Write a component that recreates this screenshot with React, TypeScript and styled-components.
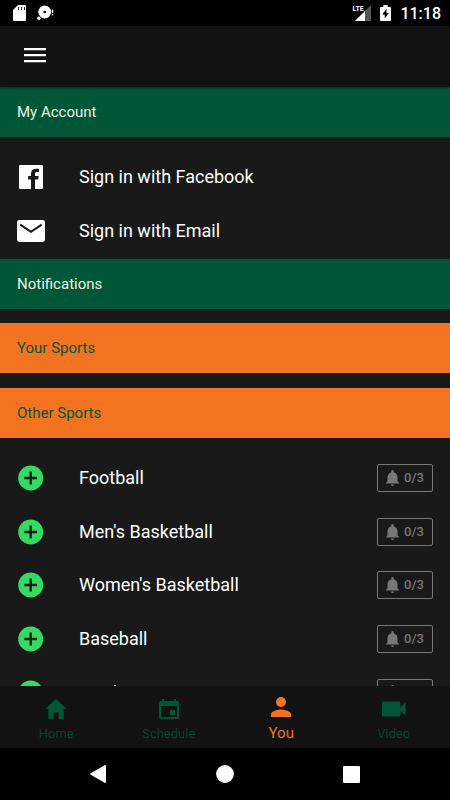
import React from "react";
import styled, { createGlobalStyle } from "styled-components";

const GlobalStyle = createGlobalStyle`
  *, *::before, *::after { box-sizing: border-box; }
  body { margin: 0; background: #191919; }
  body, button { font-family: Roboto, "Liberation Sans", sans-serif; }
  button { margin: 0; padding: 0; border: 0; background: none; color: inherit; cursor: pointer; }
`;

const Screen = styled.div`
  display: flex;
  flex-direction: column;
  height: 100vh;
  background: #191919;
  color: #fff;
`;

const StatusBar = styled.div`
  display: flex;
  flex: none;
  align-items: center;
  justify-content: space-between;
  height: 26px;
  padding: 0 9px 0 13px;
  background: #000;
`;

const StatusGroup = styled.div<{ $gap: number }>`
  display: flex;
  align-items: center;
  gap: ${(p) => p.$gap}px;
`;

const Signal = styled.div`
  position: relative;
  display: flex;
  width: 19px;
  justify-content: flex-end;
`;

const NetworkLabel = styled.span`
  position: absolute;
  top: 0;
  left: 0;
  font-size: 7px;
  font-weight: 700;
  line-height: 8px;
`;

const Clock = styled.time`
  padding-top: 2px;
  font-size: 16px;
  font-weight: 500;
  line-height: 20px;
`;

const AppBar = styled.header`
  position: relative;
  display: flex;
  flex: none;
  align-items: center;
  height: 61px;
  padding: 0 17px 3px;
  background: #121212;
  box-shadow: 0 1px 2px rgba(0, 0, 0, 0.45);
`;

const MenuButton = styled.button`
  display: flex;
  align-items: center;
  justify-content: center;
  width: 36px;
  height: 36px;
`;

const Content = styled.main`
  flex: 1;
  min-height: 0;
  overflow-y: auto;
  scrollbar-width: none;
`;

const SectionHeading = styled.h2<{ $accent?: boolean; $gap?: number }>`
  margin: ${(p) => p.$gap ?? 0}px 0 0;
  padding: 0 17px;
  background: ${(p) => (p.$accent ? "#f47321" : "#005737")};
  color: ${(p) => (p.$accent ? "#005737" : "#f0f0e0")};
  font-size: 15px;
  font-weight: 400;
  line-height: 50px;
`;

const List = styled.ul`
  display: grid;
  grid-auto-rows: 54px 53px 54px;
  margin: 0;
  padding: 13px 0 2px;
  list-style: none;
`;

const ListItem = styled.li`
  display: flex;
  align-items: center;
  padding: 0 17px;
`;

const RowButton = styled.button`
  display: flex;
  flex: 1;
  align-items: center;
  gap: 34px;
  height: 100%;
  font-size: 18px;
  line-height: 24px;
  text-align: left;
`;

const IconSlot = styled.span`
  display: flex;
  flex: none;
  justify-content: center;
  width: 28px;
`;

const AlertButton = styled.button`
  display: flex;
  flex: none;
  align-items: center;
  justify-content: center;
  gap: 5px;
  width: 56px;
  height: 28px;
  border: 1px solid #777;
  border-radius: 2px;
  color: #777;
  font-size: 13px;
  font-weight: 500;
  line-height: 16px;
`;

const TabBar = styled.nav`
  display: grid;
  flex: none;
  grid-template-columns: repeat(4, 1fr);
  height: 62px;
  background: #121212;
`;

const Tab = styled.button<{ $active?: boolean }>`
  display: flex;
  flex-direction: column;
  align-items: center;
  justify-content: flex-start;
  gap: 5px;
  padding-top: ${(p) => (p.$active ? 11 : 13)}px;
  color: ${(p) => (p.$active ? "#f47321" : "#005737")};
  font-size: ${(p) => (p.$active ? 15 : 13)}px;
  line-height: ${(p) => (p.$active ? 22 : 20)}px;
`;

const TabLabel = styled.span<{ $active?: boolean }>`
  opacity: ${(p) => (p.$active ? 1 : 0.75)};
`;

const SystemBar = styled.nav`
  display: grid;
  flex: none;
  grid-template-columns: repeat(3, 1fr);
  height: 52px;
  padding: 0 35px;
  background: #000;
`;

const SystemButton = styled.button`
  display: flex;
  align-items: center;
  justify-content: center;
`;

const SdCardIcon = () => (
  <svg width="13" height="16" viewBox="0 0 13 16" fill="#fff" aria-hidden="true">
    <path d="M5 0h7q1 0 1 1v14q0 1-1 1H1q-1 0-1-1V5z" />
    <path d="M5 2h1v3H5zM8 2h1v3H8zM11 2h1v3h-1z" fill="#222" />
  </svg>
);

const SyncIcon = () => (
  <svg width="17" height="16" viewBox="0 0 17 16" fill="#fff" aria-hidden="true">
    <circle cx="7.7" cy="7" r="6.4" />
    <circle cx="7.7" cy="7" r="1.3" fill="#000" />
    <path d="M0 11.400l2.600-.6 2 2.400-1 2.600H0z" fill="#000" />
    <circle cx="1.9" cy="13.2" r="1.7" />
    <path d="M14.800 4.400h1.400v3.800h-1.400zM14.800 9h1.400v1.400h-1.400z" />
  </svg>
);

const SignalIcon = () => (
  <svg width="16" height="16" viewBox="0 0 16 16" aria-hidden="true">
    <path d="M16 0v16H0z" fill="#555" />
    <path d="M10 6v10H0z" fill="#fff" />
  </svg>
);

const BatteryIcon = () => (
  <svg width="11" height="16" viewBox="0 0 10 16" preserveAspectRatio="none" aria-hidden="true">
    <path d="M3 0h4v2h2q1 0 1 1v12q0 1-1 1H1q-1 0-1-1V3q0-1 1-1h2z" fill="#fff" />
    <path d="M6 3.800L2 9.400h2.300v4.200L8 8H5.800z" fill="#000" />
  </svg>
);

const MenuIcon = () => (
  <svg width="22" height="16" viewBox="0 0 22 16" fill="#fff" aria-hidden="true">
    <path d="M0 1h22v2.300H0zM0 7h22v2.300H0zM0 13h22v2.300H0z" />
  </svg>
);

const FacebookIcon = () => (
  <svg width="24" height="24" viewBox="64 64 384 384" fill="#fff" aria-hidden="true">
    <path d="M426.800 64H85.200C73.500 64 64 73.500 64 85.200v341.600c0 11.700 9.500 21.200 21.200 21.200H256V296h-45.900v-56H256v-41.400c0-49.600 34.400-76.600 78.700-76.600 21.200 0 44 1.600 49.300 2.300v51.800h-35.300c-24.100 0-28.700 11.400-28.700 28.200V240h57.400l-7.500 56H320v152h106.800c11.700 0 21.200-9.500 21.200-21.200V85.200c0-11.700-9.500-21.200-21.200-21.200z" />
  </svg>
);

const MailIcon = () => (
  <svg width="28" height="22" viewBox="0 0 28 22" aria-hidden="true">
    <rect width="28" height="22" rx="2.400" fill="#fff" />
    <path d="M3.300 4.600L14 11.800l10.700-7.200" fill="none" stroke="#191919" strokeWidth="2" />
  </svg>
);

const AddIcon = () => (
  <svg width="26" height="26" viewBox="0 0 26 26" aria-hidden="true">
    <circle cx="12.700" cy="13" r="12.500" fill="#33db63" />
    <path d="M12.700 6.600v12.800M6.300 13h12.800" stroke="#191919" strokeWidth="2.400" />
  </svg>
);

const BellIcon = () => (
  <svg width="13" height="16" viewBox="0 0 13 16" fill="currentColor" aria-hidden="true">
    <path d="M6.500 16c.9 0 1.600-.7 1.600-1.500H4.900c0 .8.7 1.500 1.600 1.500zM11.500 11.300V7.200c0-2.500-1.600-4.500-3.800-5v-.9a1.200 1.200 0 0 0-2.400 0v.9c-2.200.5-3.800 2.500-3.800 5v4.100L0 12.900v.7h13v-.7z" />
  </svg>
);

const HomeIcon = () => (
  <svg width="22" height="20" viewBox="0 0 22 20" fill="currentColor" aria-hidden="true">
    <path d="M8.500 20v-6.600h5V20h5.200v-9.900H22L11 0 0 10.100h3.300V20z" />
  </svg>
);

const CalendarIcon = () => (
  <svg width="20" height="20" viewBox="0 0 20 20" fill="currentColor" aria-hidden="true">
    <path fillRule="evenodd" d="M3 0h2.200v2h9.600V0H17v2h1q2 0 2 2v14q0 2-2 2H2q-2 0-2-2V4q0-2 2-2h1zM2 7v11h16V7z" />
    <path d="M11 11h5v5h-5z" />
  </svg>
);

const PersonIcon = () => (
  <svg width="20" height="20" viewBox="0 0 20 20" fill="currentColor" aria-hidden="true">
    <circle cx="10" cy="5" r="5" />
    <path d="M10 12.400c-3.300 0-10 1.600-10 5V20h20v-2.600c0-3.400-6.700-5-10-5z" />
  </svg>
);

const VideoIcon = () => (
  <svg width="24" height="20" viewBox="0 0 24 20" fill="currentColor" aria-hidden="true">
    <path d="M18.400 8.600V3.800q0-1.300-1.300-1.300H1.300Q0 2.500 0 3.800v12.400q0 1.300 1.300 1.300h15.800q1.300 0 1.300-1.300v-4.800l5.100 5.300V3.300z" />
  </svg>
);

const BackIcon = () => (
  <svg width="16" height="18" viewBox="0 0 16 18" fill="#fff" aria-hidden="true">
    <path d="M14.600.2Q16-.4 16 1v16q0 1.400-1.400.8L.7 9.700q-1.100-.7 0-1.400z" />
  </svg>
);

const CircleIcon = () => (
  <svg width="18" height="18" viewBox="0 0 18 18" fill="#fff" aria-hidden="true">
    <circle cx="9" cy="9" r="8.900" />
  </svg>
);

const SquareIcon = () => (
  <svg width="17" height="17" viewBox="0 0 17 17" fill="#fff" aria-hidden="true">
    <rect width="17" height="17" rx="1" />
  </svg>
);

const accountActions = [
  { label: "Sign in with Facebook", Icon: FacebookIcon },
  { label: "Sign in with Email", Icon: MailIcon },
];

const sports = ["Football", "Men's Basketball", "Women's Basketball", "Baseball", "Men's Tennis"];

const tabs = [
  { label: "Home", Icon: HomeIcon },
  { label: "Schedule", Icon: CalendarIcon },
  { label: "You", Icon: PersonIcon, active: true },
  { label: "Video", Icon: VideoIcon },
];

export default function App() {
  return (
    <Screen>
      <GlobalStyle />
      <StatusBar>
        <StatusGroup $gap={11}>
          <SdCardIcon />
          <SyncIcon />
        </StatusGroup>
        <StatusGroup $gap={9}>
          <Signal>
            <SignalIcon />
            <NetworkLabel>LTE</NetworkLabel>
          </Signal>
          <BatteryIcon />
          <Clock>11:18</Clock>
        </StatusGroup>
      </StatusBar>
      <AppBar>
        <MenuButton aria-label="Menu">
          <MenuIcon />
        </MenuButton>
      </AppBar>
      <Content>
        <SectionHeading>My Account</SectionHeading>
        <List>
          {accountActions.map(({ label, Icon }) => (
            <ListItem key={label}>
              <RowButton>
                <IconSlot>
                  <Icon />
                </IconSlot>
                {label}
              </RowButton>
            </ListItem>
          ))}
        </List>
        <SectionHeading>Notifications</SectionHeading>
        <SectionHeading $accent $gap={14}>
          Your Sports
        </SectionHeading>
        <SectionHeading $accent $gap={15}>
          Other Sports
        </SectionHeading>
        <List>
          {sports.map((sport) => (
            <ListItem key={sport}>
              <RowButton>
                <IconSlot>
                  <AddIcon />
                </IconSlot>
                {sport}
              </RowButton>
              <AlertButton aria-label={`${sport} alerts, 0/3`}>
                <BellIcon />
                0/3
              </AlertButton>
            </ListItem>
          ))}
        </List>
      </Content>
      <TabBar>
        {tabs.map(({ label, Icon, active }) => (
          <Tab key={label} $active={active} aria-current={active ? "page" : undefined}>
            <Icon />
            <TabLabel $active={active}>{label}</TabLabel>
          </Tab>
        ))}
      </TabBar>
      <SystemBar>
        <SystemButton aria-label="Back">
          <BackIcon />
        </SystemButton>
        <SystemButton aria-label="Home screen">
          <CircleIcon />
        </SystemButton>
        <SystemButton aria-label="Recent apps">
          <SquareIcon />
        </SystemButton>
      </SystemBar>
    </Screen>
  );
}
